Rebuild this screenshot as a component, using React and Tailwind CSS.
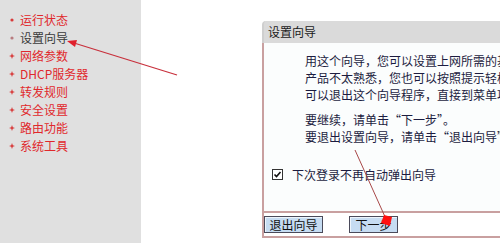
import React from "react";

const menu = [
  { label: "运行状态", dot: true },
  { label: "设置向导", dot: true, active: true },
  { label: "网络参数" },
  { label: "DHCP服务器" },
  { label: "转发规则" },
  { label: "安全设置" },
  { label: "路由功能" },
  { label: "系统工具" },
];

const intro = [
  "用这个向导，您可以设置上网所需的基本网络参数。如果您对本",
  "产品不太熟悉，您也可以按照提示轻松完成设置。如果您对路由",
  "可以退出这个向导程序，直接到菜单项中进行设置。",
];

function Bullet({ dot, active }) {
  if (dot) {
    return (
      <svg width="6" height="6" viewBox="0 0 6 6" className="shrink-0">
        <circle cx="3" cy="3" r="1.6" fill={active ? "#b87c80" : "#d83a3a"} />
      </svg>
    );
  }
  return (
    <svg width="6" height="6" viewBox="0 0 6 6" className="shrink-0">
      <path d="M3 0 L3.8 2.2 L6 3 L3.8 3.8 L3 6 L2.2 3.8 L0 3 L2.2 2.2 Z" fill="#d83a3a" />
    </svg>
  );
}

function Btn({ children, w }) {
  return (
    <button
      className={`${w} h-[17px] bg-[#c6dcf2] border border-[#4a4a5a] shadow-[inset_1px_1px_0_#eef5fc] text-[12px] leading-[15px] text-[#111] flex items-center justify-center`}
    >
      {children}
    </button>
  );
}

export default function App() {
  return (
    <div
      className="relative w-[500px] h-[243px] overflow-hidden bg-white flex"
      style={{ fontFamily: '"Noto Sans CJK SC", "Liberation Sans", sans-serif' }}
    >
      <aside className="w-[141px] shrink-0 bg-[#e0e0e0] pt-[11px] pl-[9px]">
        {menu.map((m) => (
          <div key={m.label} className="h-[18px] flex items-center gap-[5px]">
            <Bullet dot={m.dot} active={m.active} />
            <span
              className={`text-[12px] leading-[18px] ${m.active ? "text-[#3a3a3a]" : "text-[#e0282c]"}`}
            >
              {m.label}
            </span>
          </div>
        ))}
      </aside>

      <main className="flex-1 pl-[121px] pt-[21px]">
        <div className="w-[320px]">
          <div className="h-[22px] rounded-tl-[4px] bg-[#dadada] border-l-2 border-[#cfcfcf] flex items-center pl-[4px] text-[12px] text-[#1a1a1a]">
            设置向导
          </div>
          <div className="h-[168px] bg-[#fbfdfd] border-l-2 border-[#c9a0a0] text-[12px] leading-[17px] text-[#1c1c40]">
            <div className="pl-[41px] pt-[9px] whitespace-nowrap">
              {intro.map((l) => (
                <div key={l}>{l}</div>
              ))}
              <div className="mt-[8px]">要继续，请单击“下一步”。</div>
              <div>要退出设置向导，请单击“退出向导”。</div>
            </div>
            <div className="mt-[21px] pl-[8px] h-[17px] flex items-center gap-[9px] whitespace-nowrap">
              <svg width="11" height="11" viewBox="0 0 11 11" className="shrink-0">
                <rect x="0.5" y="0.5" width="10" height="10" fill="#fff" stroke="#333" />
                <path d="M2.5 5.5 L4.5 7.6 L8.5 3" fill="none" stroke="#111" strokeWidth="1.6" />
              </svg>
              <span>下次登录不再自动弹出向导</span>
            </div>
          </div>
          <div className="h-[27px] border-t-2 border-b-2 border-l-2 border-[#c9a0a0] bg-white flex items-center gap-[26px]">
            <Btn w="w-[59px]">退出向导</Btn>
            <Btn w="w-[49px]">下一步</Btn>
          </div>
        </div>
      </main>

      <svg className="absolute inset-0 pointer-events-none" width="500" height="243" viewBox="0 0 500 243">
        <line x1="177" y1="75" x2="74" y2="43" stroke="#c8303c" strokeWidth="1.2" />
        <polygon points="67,41 77,40 75,47" fill="#e0202c" />
        <line x1="355" y1="150" x2="386" y2="219" stroke="#a84848" strokeWidth="1" />
        <polygon points="384,215 392,217 390,226 381,223" fill="#ff1010" />
      </svg>
    </div>
  );
}
